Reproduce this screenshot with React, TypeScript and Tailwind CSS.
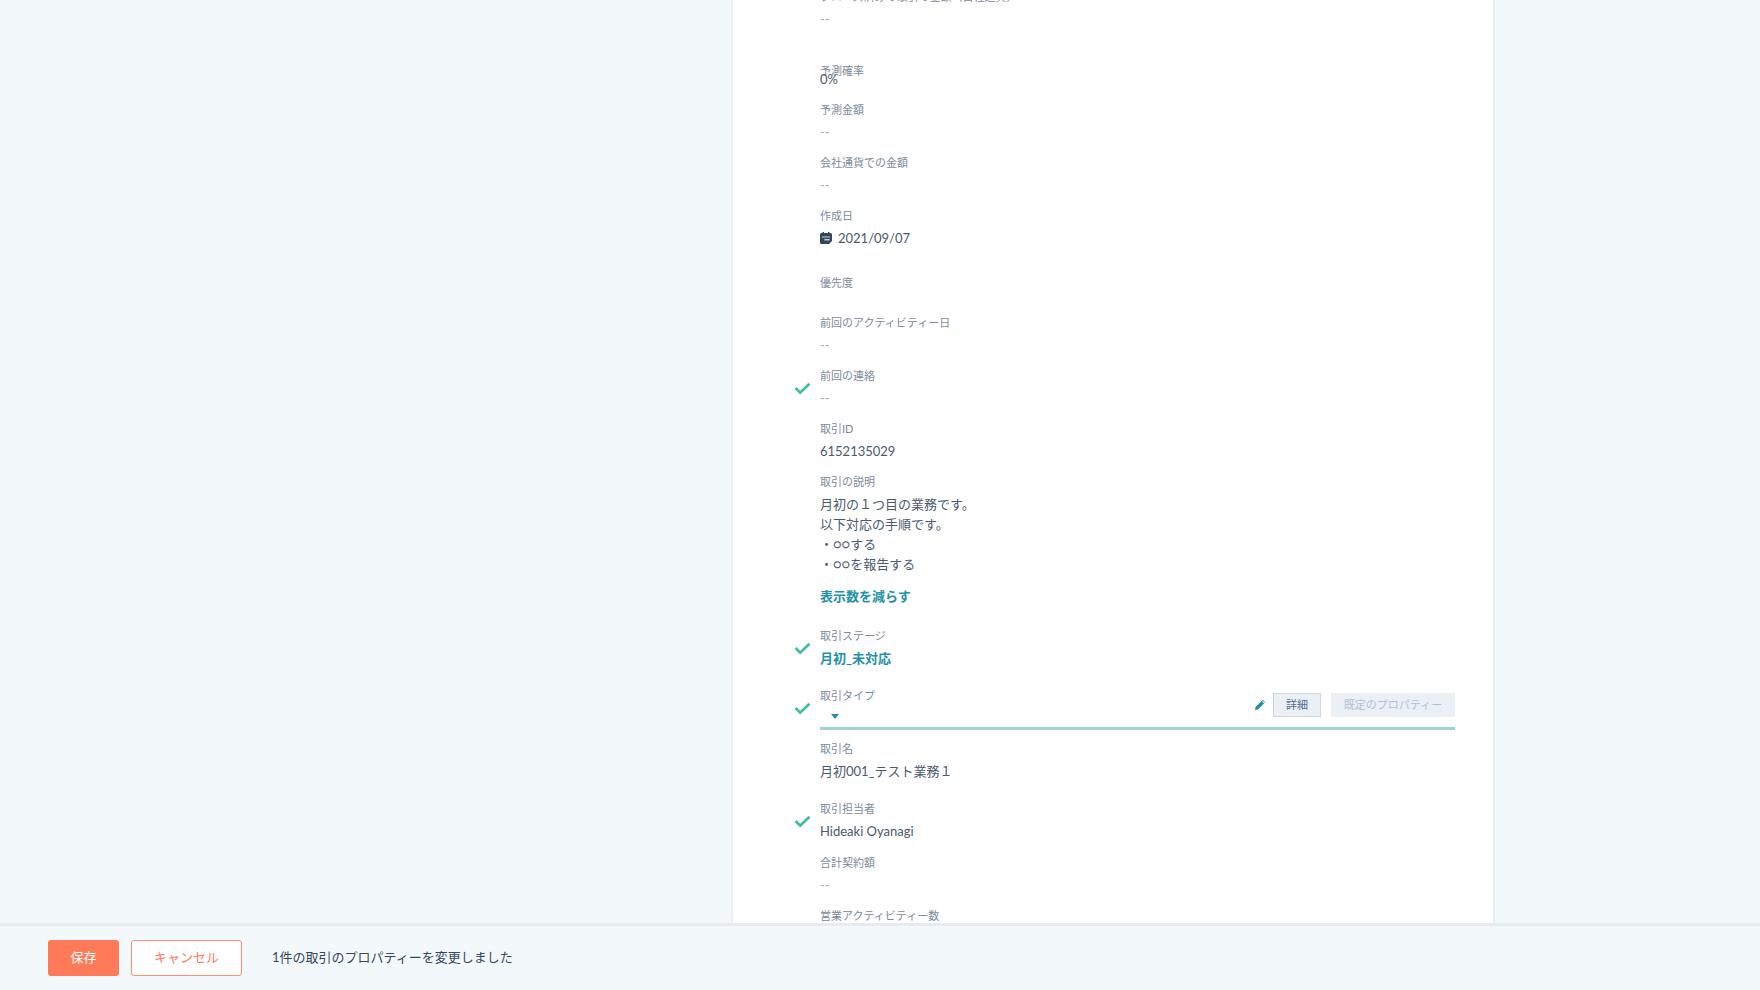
import React, { useState } from 'react';

const CheckIcon = () => (
    <svg viewBox="0 0 18 14" className="h-[13px] w-[17px]" fill="none" stroke="#42bda3" strokeWidth="3">
        <path d="M1.5 6.5 L6.5 11.5 L16.5 2" />
    </svg>
);

const PencilIcon = () => (
    <svg viewBox="0 0 10 10" className="h-[10px] w-[10px]" fill="#1f93a5">
        <path d="M0 10 L0.6 7 L6.6 1 L9 3.4 L3 9.4 Z" />
        <path d="M7.2 0.5 L8 0 L10 2 L9.5 2.8 Z" />
    </svg>
);

const CalendarIcon = () => (
    <svg viewBox="0 0 12 12" className="h-3 w-3" fill="#33475b">
        <path d="M2.5 0h1.5v1h4V0h1.5v1H10.5Q12 1 12 2.5V9L9 12H1.5Q0 12 0 10.5V2.5Q0 1 1.5 1h1Z" />
        <path d="M2 4.5h8v1H2Z M4.5 7h5v1.5h-5Z" fill="#c9d5e0" />
    </svg>
);

const Field = ({ label, checked = false, className = '', children = null }) => {
    return (
        <div className={`flex ${className}`}>
            {/* Column for the changed mark */}
            <div className="w-[26px] shrink-0 pt-4">{checked && <CheckIcon />}</div>
            <div className="min-w-0 flex-1">
                <dt className="text-[11px] leading-5 text-[#7c8a9c]">{label}</dt>
                {children}
            </div>
        </div>
    );
};

const Value = ({ className = 'mt-[2px]', children }) => (
    <dd className={`text-[13px] leading-5 text-[#4a5a6e] ${className}`}>{children}</dd>
);

const Empty = () => (
    <dd className="mt-[2px] text-[13px] leading-5 text-[#a3adb9]">--</dd>
);

const DealTypeField = () => {
    return (
        <Field label={<label htmlFor="deal-type">取引タイプ</label>} checked className="h-[53px]">
            <dd className="-mt-5 flex h-11 items-end border-b-[3px] border-[#9fd3d6]">
                <div className="flex h-[22px] flex-1 items-center pl-[11px]">
                    <div className="relative flex">
                        <select id="deal-type" className="h-4 w-10 appearance-none bg-transparent text-[13px] outline-none">
                            <option value=""></option>
                        </select>
                        <span className="pointer-events-none absolute top-[6px] left-0 border-x-4 border-t-[5px] border-x-transparent border-t-[#1f93a5]" />
                    </div>
                </div>
                <div className="mb-[10px] flex items-center">
                    <button aria-label="編集" className="mr-2">
                        <PencilIcon />
                    </button>
                    <button className="mr-[10px] h-6 w-12 border border-[#cbd6e2] bg-[#eaf0f6] text-[11px] text-[#506e91]">
                        詳細
                    </button>
                    <button disabled className="h-6 w-[124px] bg-[#eaf0f6] text-[11px] text-[#b0c1d4]">
                        既定のプロパティー
                    </button>
                </div>
            </dd>
        </Field>
    );
};

const PropertyList = () => {
    const [expanded, setExpanded] = useState(true);

    return (
        <dl className="-mt-[13px]">
            <Field label="クローズ済みの取引の金額（自社通貨）" className="h-[54px]"><Empty /></Field>
            <Field label="予測確率" className="mt-5 h-[39px]"><Value className="-mt-3">0%</Value></Field>
            <Field label="予測金額" className="h-[53px]"><Empty /></Field>
            <Field label="会社通貨での金額" className="h-[53px]"><Empty /></Field>
            <Field label="作成日" className="h-[53px]">
                <Value>
                    <span className="flex items-center gap-[6px]">
                        <CalendarIcon />
                        2021/09/07
                    </span>
                </Value>
            </Field>
            <Field label="優先度" className="mt-[14px] h-10" />
            <Field label="前回のアクティビティー日" className="h-[53px]"><Empty /></Field>
            <Field label="前回の連絡" checked className="h-[53px]"><Empty /></Field>
            <Field label="取引ID" className="h-[53px]"><Value>6152135029</Value></Field>
            <Field label="取引の説明" className="mb-5">
                <Value>
                    月初の１つ目の業務です。<br />
                    以下対応の手順です。
                    {expanded && <><br />・○○する<br />・○○を報告する</>}
                </Value>
                <dd className="mt-3">
                    <button onClick={() => setExpanded(!expanded)} className="block text-[13px] leading-5 font-bold text-[#1f93a5]">
                        表示数を減らす
                    </button>
                </dd>
            </Field>
            <Field label="取引ステージ" checked className="h-[60px]">
                <dd className="mt-[2px]">
                    <button className="block text-[13px] leading-5 font-bold text-[#1f93a5]">月初_未対応</button>
                </dd>
            </Field>
            <DealTypeField />
            <Field label="取引名" className="h-[60px]"><Value>月初001_テスト業務１</Value></Field>
            <Field label="取引担当者" checked className="h-[54px]"><Value>Hideaki Oyanagi</Value></Field>
            <Field label="合計契約額" className="h-[53px]"><Empty /></Field>
            <Field label="営業アクティビティー数" className="h-[53px]"><Empty /></Field>
        </dl>
    );
};

const SaveBar = () => {
    return (
        <footer className="flex h-[67px] shrink-0 items-center border-t-[3px] border-[#e5ebf0] bg-[#f3f8fb] pl-12 text-[13px]">
            <button className="h-9 w-[71px] rounded-[3px] bg-[#ff7a59] text-white">保存</button>
            <button className="ml-3 h-9 w-[111px] rounded-[3px] border border-[#ff8f73] bg-white text-[#ff7a59]">
                キャンセル
            </button>
            <p className="ml-[30px] text-[#33475b]">1件の取引のプロパティーを変更しました</p>
        </footer>
    );
};

export default function App() {
    return (
        <div className="flex h-screen flex-col bg-[#f3f8fb] font-[Lato,'Noto_Sans_CJK_JP',sans-serif]">
            <div className="grid min-h-0 flex-1 grid-cols-[733fr_760fr_267fr] overflow-hidden">
                <main className="col-start-2 overflow-hidden bg-white pr-[38px] pl-[61px] ring-2 ring-[#eaf0f5]">
                    <PropertyList />
                </main>
            </div>
            <SaveBar />
        </div>
    );
}
